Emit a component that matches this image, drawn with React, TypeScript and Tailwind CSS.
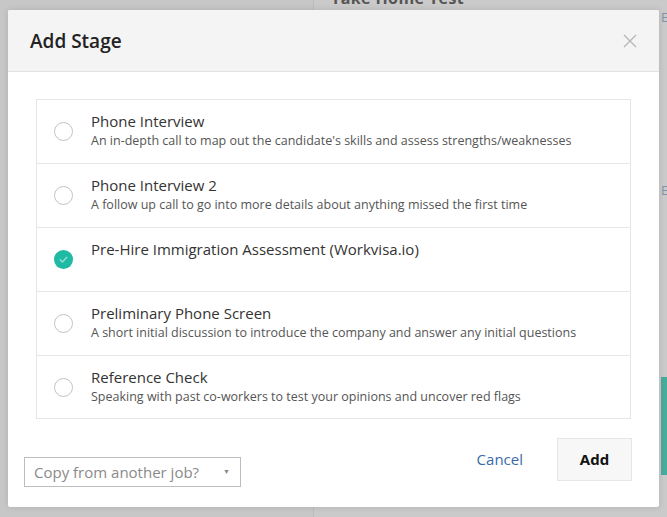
import React from "react";

const stages = [
  {
    title: "Phone Interview",
    desc: "An in-depth call to map out the candidate's skills and assess strengths/weaknesses",
    checked: false,
  },
  {
    title: "Phone Interview 2",
    desc: "A follow up call to go into more details about anything missed the first time",
    checked: false,
  },
  {
    title: "Pre-Hire Immigration Assessment (Workvisa.io)",
    desc: "",
    checked: true,
  },
  {
    title: "Preliminary Phone Screen",
    desc: "A short initial discussion to introduce the company and answer any initial questions",
    checked: false,
  },
  {
    title: "Reference Check",
    desc: "Speaking with past co-workers to test your opinions and uncover red flags",
    checked: false,
  },
];

function Radio({ checked }: { checked: boolean }) {
  if (checked) {
    return (
      <div className="w-[19px] h-[19px] rounded-full bg-[#1fbaa4] flex items-center justify-center shrink-0">
        <svg width="11" height="11" viewBox="0 0 11 11">
          <path d="M2.2 5.8 L4.4 8 L8.8 3.2" fill="none" stroke="#8fe0d2" strokeWidth="1.4" strokeLinecap="round" strokeLinejoin="round" />
        </svg>
      </div>
    );
  }
  return <div className="w-[19px] h-[19px] rounded-full border-[1.5px] border-[#c4c4c4] bg-white shrink-0" />;
}

export default function App() {
  return (
    <div
      className="relative w-[667px] h-[517px] overflow-hidden bg-[#c7c7c7]"
      style={{ fontFamily: '"Open Sans", "Noto Sans", sans-serif' }}
    >
      {/* underlying page (dimmed) */}
      <div className="absolute left-[313px] top-0 right-0 bottom-0 bg-[#cacaca] border-l border-[#bdbdbd]">
        <div className="absolute left-[17px] top-[-13px] text-[16px] leading-[22px] font-bold text-[#555] tracking-wide">
          Take Home Test
        </div>
        <div className="absolute left-[347px] top-[8px] text-[13px] text-[#7f93ad]">E</div>
        <div className="absolute left-[347px] top-[181px] text-[13px] text-[#7f93ad]">E</div>
        <div className="absolute left-[347px] top-[377px] w-[10px] h-[98px] bg-[#49ab9c]" />
      </div>

      {/* modal */}
      <div className="absolute left-[8px] top-[10px] w-[651px] h-[497px] bg-white rounded-[2px] flex flex-col shadow-[0_0_6px_rgba(0,0,0,0.12)]">
        <div className="h-[62px] bg-[#f4f4f4] border-b border-[#e2e2e2] flex items-center justify-between pl-[22px] pr-[22px] rounded-t-[2px] shrink-0">
          <div className="text-[19px] font-semibold text-[#222] pt-[2px]">Add Stage</div>
          <svg width="14" height="14" viewBox="0 0 14 14" className="mt-[1px]">
            <path d="M1 1 L13 13 M13 1 L1 13" stroke="#b5b5b5" strokeWidth="1.3" fill="none" />
          </svg>
        </div>

        <div className="pt-[27px] px-[28px]">
          <div className="border border-[#e6e6e6]">
            {stages.map((s, i) => (
              <div
                key={s.title}
                className={`flex items-center pl-[17px] ${i < stages.length - 1 ? "h-[64px] border-b border-[#e6e6e6]" : "h-[62px]"}`}
              >
                <Radio checked={s.checked} />
                <div className="ml-[18px] self-start pt-[11px]">
                  <div className="text-[15px] leading-[20px] text-[#333]">{s.title}</div>
                  {s.desc && (
                    <div className="text-[12.5px] leading-[18px] text-[#555] mt-[1px]">{s.desc}</div>
                  )}
                </div>
              </div>
            ))}
          </div>
        </div>

        <div className="flex justify-between items-start pl-[16px] pr-[27px] pt-[19px]">
          <div className="mt-[19px] w-[217px] h-[30px] border border-[#bdbdbd] flex items-center justify-between pl-[9px] pr-[10px] bg-white">
            <span className="text-[15px] text-[#8a8a8a]">Copy from another job?</span>
            <span className="text-[7px] text-[#888]">▼</span>
          </div>
          <div className="flex items-center">
            <span className="text-[15px] text-[#3b6aa8] mr-[34px]">Cancel</span>
            <div className="w-[75px] h-[43px] bg-[#f7f7f7] border border-[#e6e6e6] flex items-center justify-center text-[15px] font-bold text-[#111]">
              Add
            </div>
          </div>
        </div>
      </div>
    </div>
  );
}
